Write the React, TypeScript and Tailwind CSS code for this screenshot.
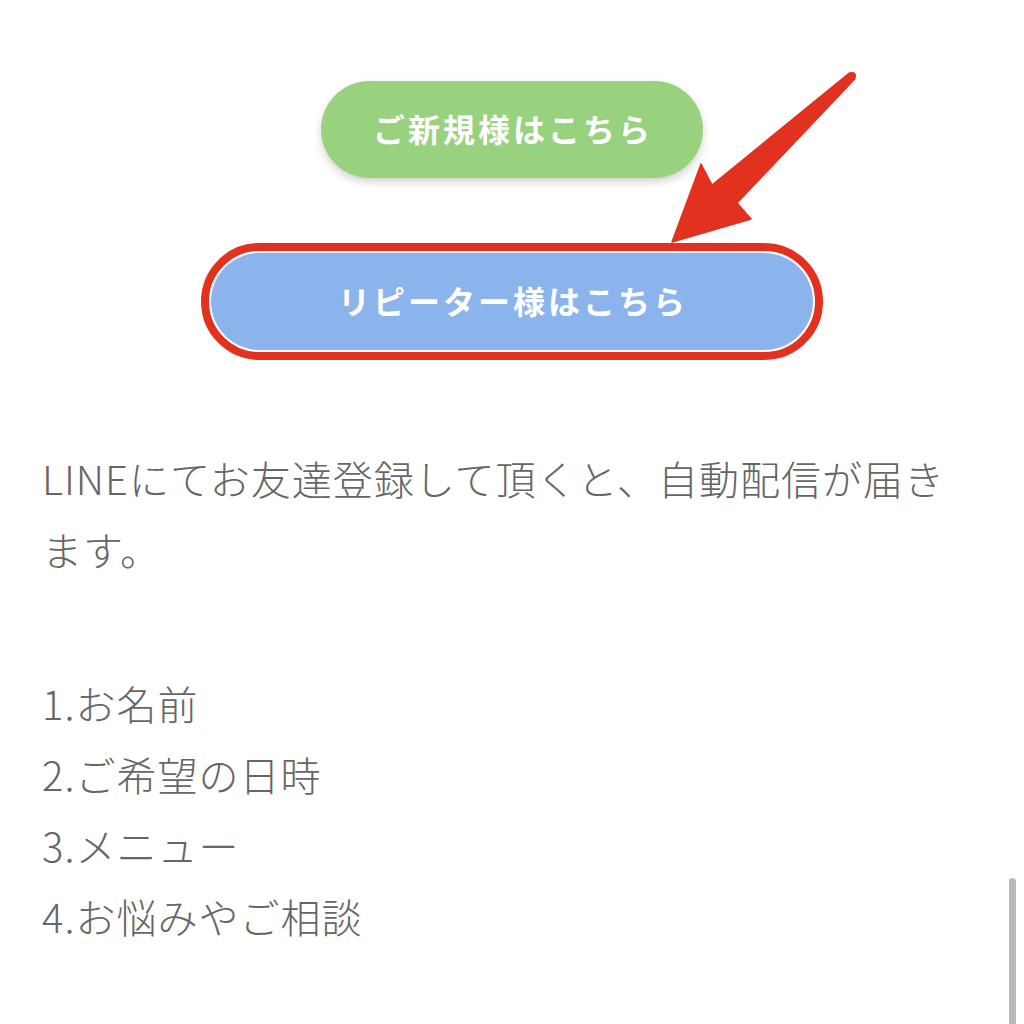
import React from "react";

export default function App() {
  return (
    <div
      className="relative w-[1024px] h-[1024px] overflow-hidden bg-white"
      style={{ fontFamily: '"Noto Sans CJK JP", "Noto Sans", sans-serif' }}
    >
      <div className="flex flex-col items-center pt-[81px]">
        <div className="w-[382px] h-[97px] rounded-full bg-[#98d27f] shadow-[0_4px_8px_rgba(0,0,0,0.18)] flex items-center justify-center text-white text-[32px] font-semibold tracking-[3px] pl-[2px] pb-[3px]">
          ご新規様はこちら
        </div>
        <div className="mt-[65px] rounded-full border-[8px] border-[#e2311f] p-[2px] bg-white">
          <div className="w-[602px] h-[97px] rounded-full bg-[#8cb4ec] flex items-center justify-center text-white text-[32px] font-semibold tracking-[3px] pl-[2px] pb-[3px]">
            リピーター様はこちら
          </div>
        </div>
        <div className="self-stretch pl-[42px] mt-[83px] text-[40px] leading-[71px] text-[#666666] tracking-[1px] font-light">
          <p>
            LINEにてお友達登録して頂くと、自動配信が届き
            <br />
            ます。
          </p>
          <div className="mt-[83px]">
            <p>1.お名前</p>
            <p>2.ご希望の日時</p>
            <p>3.メニュー</p>
            <p>4.お悩みやご相談</p>
          </div>
        </div>
      </div>

      {/* annotation arrow */}
      <svg
        className="absolute left-0 top-0 pointer-events-none"
        width="1024"
        height="1024"
        viewBox="0 0 1024 1024"
      >
        <path
          d="M849.3 73.1 L712 185 L701 164 L672 242 L751 219 L737 203 L854.7 78.9 Z"
          fill="#e2311f"
          stroke="#e2311f"
          strokeWidth="1.5"
          strokeLinejoin="round"
        />
        <circle cx="852" cy="76" r="4" fill="#e2311f" />
      </svg>

      {/* scrollbar */}
      <div className="absolute left-[1009px] top-[878px] w-[7px] h-[160px] rounded-full bg-[#b8b8b8]" />
    </div>
  );
}
